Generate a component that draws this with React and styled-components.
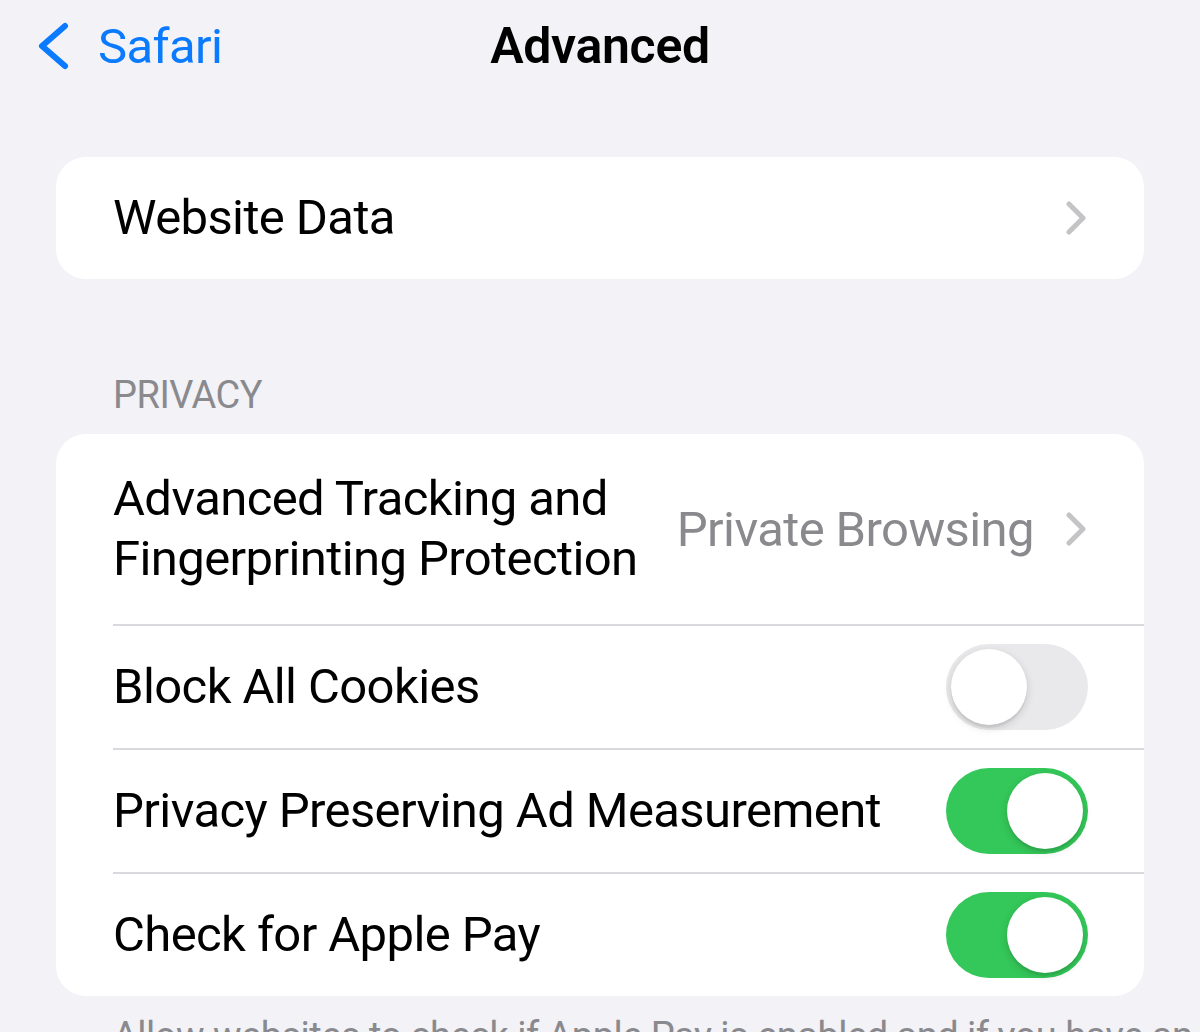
import React from 'react'
import styled, { createGlobalStyle } from 'styled-components'

const GlobalStyle = createGlobalStyle`
    html, body {
        margin: 0;
        padding: 0;
        background: #f2f2f7;
    }
    body {
        font-family: 'Roboto', 'Noto Sans', sans-serif;
        -webkit-font-smoothing: antialiased;
    }
`;

const Page = styled.div`
    width: 1200px;
    height: 1032px;
    overflow: hidden;
    background: #f2f2f7;
`;

const NavBar = styled.div`
    height: 92px;
    display: grid;
    grid-template-columns: 1fr auto 1fr;
    align-items: center;
    padding: 0 38px;
`;

const Back = styled.div`
    display: flex;
    align-items: center;
    gap: 29px;
    color: #0a7aff;
    font-size: 49px;
    letter-spacing: -0.6px;
`;

const Title = styled.div`
    font-size: 50px;
    font-weight: 600;
    color: #000;
    letter-spacing: -0.3px;
`;

const Content = styled.div`
    padding: 65px 56px 0;
`;

const Card = styled.div`
    background: #fff;
    border-radius: 30px;
    overflow: hidden;
`;

const SectionHeader = styled.div`
    margin: 97px 0 20px 57px;
    font-size: 38px;
    line-height: 38px;
    color: #8a8a8e;
    letter-spacing: -0.5px;
`;

const Row = styled.div`
    padding-left: 57px;
`;

const RowInner = styled.div`
    min-height: ${p => p.$tall ? 120 : 122}px;
    padding: ${p => p.$tall ? '35px' : '0'} 56px ${p => p.$tall ? '35px' : '0'} 0;
    display: flex;
    align-items: center;
    gap: 24px;
    border-bottom: ${p => p.$last ? 'none' : '2px solid #d9d9dd'};
`;

const Label = styled.div`
    flex: 1;
    min-width: 0;
    font-size: 49px;
    line-height: 60px;
    color: #000;
    letter-spacing: -0.6px;
    white-space: nowrap;
`;

const Detail = styled.div`
    display: flex;
    align-items: center;
    gap: 32px;
    padding-right: 2px;
    font-size: 49px;
    color: #8a8a8e;
    letter-spacing: -0.6px;
    white-space: nowrap;
`;

const Track = styled.div`
    position: relative;
    width: 142px;
    height: 86px;
    border-radius: 43px;
    flex-shrink: 0;
    background: ${p => p.$on ? '#34c759' : '#e9e9eb'};
`;

const Knob = styled.div`
    position: absolute;
    top: 5px;
    left: ${p => p.$on ? '61px' : '5px'};
    width: 76px;
    height: 76px;
    border-radius: 50%;
    background: #fff;
    box-shadow: 0 3px 8px rgba(0, 0, 0, 0.15), 0 3px 1px rgba(0, 0, 0, 0.06);
`;

const Footer = styled.div`
    margin: 17px 0 0 57px;
    font-size: 38px;
    line-height: 47px;
    color: #8a8a8e;
    letter-spacing: -0.5px;
    white-space: nowrap;
`;

const Chevron = () => (
    <svg width="20" height="34" viewBox="0 0 20 34">
        <polyline points="3,3 17,17 3,31" fill="none" stroke="#c4c4c7" strokeWidth="5" strokeLinecap="round" strokeLinejoin="round" />
    </svg>
);

const BackChevron = () => (
    <svg width="31" height="48" viewBox="0 0 31 48">
        <polyline points="27,4 4,24 27,44" fill="none" stroke="#0a7aff" strokeWidth="6" strokeLinecap="round" strokeLinejoin="round" />
    </svg>
);

const Toggle = ({ on }) => (
    <Track $on={on}>
        <Knob $on={on} />
    </Track>
);

const rows = [
    { label: 'Block All Cookies', on: false },
    { label: 'Privacy Preserving Ad Measurement', on: true },
    { label: 'Check for Apple Pay', on: true },
];

function App() {
    return (
        <Page>
            <GlobalStyle />
            <NavBar>
                <Back><BackChevron />Safari</Back>
                <Title>Advanced</Title>
                <div />
            </NavBar>
            <Content>
                <Card>
                    <Row>
                        <RowInner $last>
                            <Label>Website Data</Label>
                            <Detail><Chevron /></Detail>
                        </RowInner>
                    </Row>
                </Card>

                <SectionHeader>PRIVACY</SectionHeader>
                <Card>
                    <Row>
                        <RowInner $tall>
                            <Label>Advanced Tracking and<br />Fingerprinting Protection</Label>
                            <Detail>Private Browsing<Chevron /></Detail>
                        </RowInner>
                    </Row>
                    {rows.map((r, i) => (
                        <Row key={r.label}>
                            <RowInner $last={i === rows.length - 1}>
                                <Label>{r.label}</Label>
                                <Toggle on={r.on} />
                            </RowInner>
                        </Row>
                    ))}
                </Card>
                <Footer>Allow websites to check if Apple Pay is enabled and if you have an Apple Card account.</Footer>
            </Content>
        </Page>
    )
}

export default App
